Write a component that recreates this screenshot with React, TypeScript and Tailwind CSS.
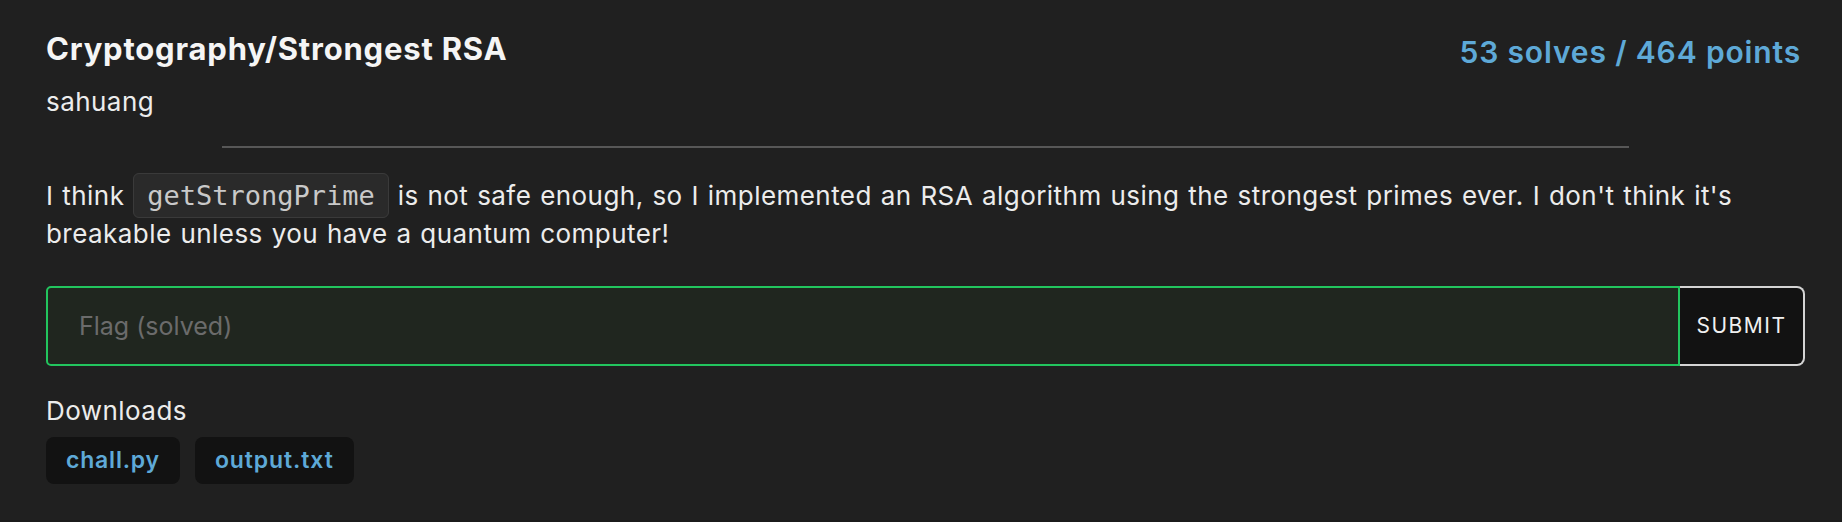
import React from "react";

export default function App() {
  return (
    <div
      className="w-full h-[522px] bg-[#1b1b1b]"
      style={{ fontFamily: "Inter, 'Noto Sans', sans-serif" }}
    >
      <div className="h-[520px] bg-[#202020] pl-[46px] pr-[37px] pt-[31px]">
        <div className="flex justify-between items-start">
          <h1 className="text-[31px] leading-[36px] font-bold tracking-[0.8px] text-[#f5f5f5]">
            Cryptography/Strongest RSA
          </h1>
          <div className="text-[30px] leading-[36px] font-semibold tracking-[0.85px] text-[#5ea9d7] mr-[4px] mt-[3px]">
            53 solves / 464 points
          </div>
        </div>
        <div className="mt-[16px] text-[26px] leading-[32px] tracking-[0.45px] text-[#ececec]">
          sahuang
        </div>
        <div className="mt-[27.5px] h-[2px] w-4/5 mx-auto bg-[#575757]" />
        <p className="mt-[29.5px] text-[26px] leading-[38px] tracking-[0.45px] [word-spacing:1.1px] text-[#ececec]">
          I think{" "}
          <code
            className="px-[13px] py-[6px] rounded-[6px] border border-[#3a3a3a] bg-[#2a2a2a] text-[#c9c9c9] text-[27px] leading-none tracking-normal [word-spacing:0px]"
            style={{ fontFamily: "'DejaVu Sans Mono', 'Liberation Mono', monospace" }}
          >
            getStrongPrime
          </code>{" "}
          is not safe enough, so I implemented an RSA algorithm using the
          strongest primes ever. I don't think it's breakable unless you have a
          quantum computer!
        </p>
        <div className="mt-[33px] flex h-[80px]">
          <input
            readOnly
            placeholder="Flag (solved)"
            className="flex-1 min-w-0 h-full border-2 border-[#22c55e] rounded-l-[5px] bg-[#20261f] pl-[31px] text-[25px] text-[#ececec] placeholder:text-[#6b6b6b] outline-none"
          />
          <button className="w-[125px] h-full border-2 border-l-0 border-[#d4d4d4] rounded-r-[8px] bg-[#121212] text-[21px] tracking-[1.5px] text-[#f0f0f0]">
            SUBMIT
          </button>
        </div>
        <div className="mt-[28.5px] text-[26px] leading-[32px] tracking-[0.45px] text-[#ececec]">
          Downloads
        </div>
        <div className="mt-[10.5px] flex gap-[15px]">
          <div className="h-[47px] px-[20px] rounded-[8px] bg-[#121212] text-[#5ea9d7] font-semibold text-[23px] tracking-[0.8px] flex items-center">
            chall.py
          </div>
          <div className="h-[47px] px-[20px] rounded-[8px] bg-[#121212] text-[#5ea9d7] font-semibold text-[23px] tracking-[0.9px] flex items-center">
            output.txt
          </div>
        </div>
      </div>
    </div>
  );
}
